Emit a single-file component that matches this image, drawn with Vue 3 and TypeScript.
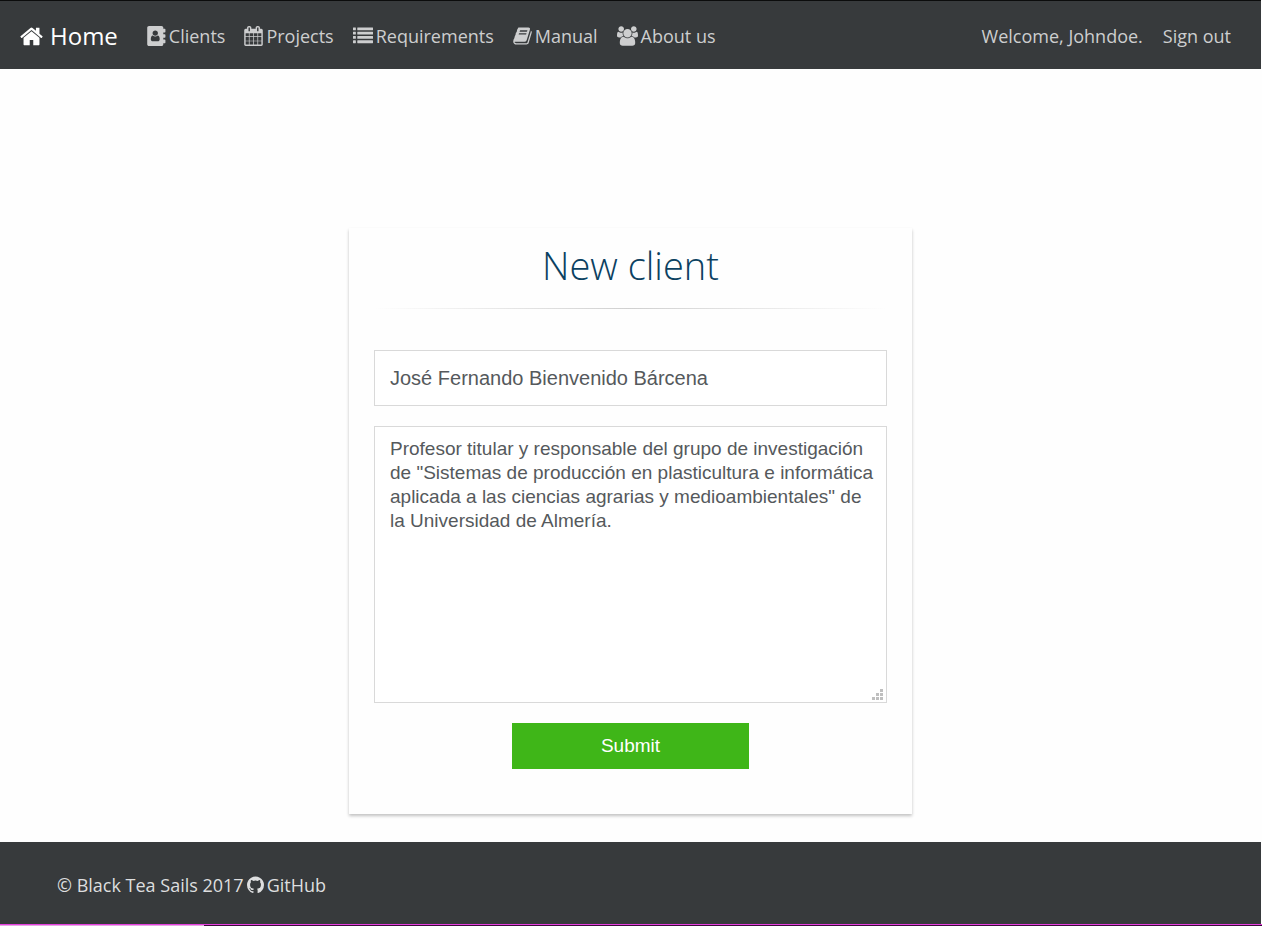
<script setup lang="ts">
import { ref } from 'vue'

interface NavItem {
  label: string
  width: number
  viewBox: string
  path: string
}

const navItems: NavItem[] = [
  {
    label: 'Clients',
    width: 19,
    viewBox: '0 0 1664 1792',
    path: 'M160 0h1120q66 0 113 47t47 113v1472q0 66-47 113t-113 47h-1120q-66 0-113-47t-47-113v-1472q0-66 47-113t113-47zM720 400q-100 0-170 70t-70 170 70 170 170 70 170-70 70-170-70-170-170-70zM500 850q-82 8-126 86t-54 234q0 90 50 146t130 56h440q80 0 130-56t50-146q-10-156-54-234t-126-86q-98 90-220 90t-220-90zM1440 256h128q26 0 45 19t19 45v192q0 26-19 45t-45 19h-128zM1440 736h128q26 0 45 19t19 45v192q0 26-19 45t-45 19h-128zM1440 1216h128q26 0 45 19t19 45v192q0 26-19 45t-45 19h-128z',
  },
  {
    label: 'Projects',
    width: 19,
    viewBox: '64 0 1664 1792',
    path: 'M192 1664h288v-288h-288v288zm352 0h320v-288h-320v288zm-352-352h288v-320h-288v320zm352 0h320v-320h-320v320zm-352-384h288v-288h-288v288zm736 736h320v-288h-320v288zm-384-736h320v-288h-320v288zm768 736h288v-288h-288v288zm-384-352h320v-320h-320v320zm-352-864v-288q0-13-9.500-22.500t-22.500-9.500h-64q-13 0-22.500 9.500t-9.500 22.500v288q0 13 9.500 22.500t22.500 9.500h64q13 0 22.500-9.500t9.500-22.500zm736 864h288v-320h-288v320zm-384-384h320v-288h-320v288zm384 0h288v-288h-288v288zm32-480v-288q0-13-9.500-22.500t-22.500-9.500h-64q-13 0-22.500 9.500t-9.500 22.500v288q0 13 9.500 22.500t22.500 9.500h64q13 0 22.500-9.500t9.500-22.500zm384-64v1280q0 52-38 90t-90 38h-1408q-52 0-90-38t-38-90v-1280q0-52 38-90t90-38h128v-96q0-66 47-113t113-47h64q66 0 113 47t47 113v96h384v-96q0-66 47-113t113-47h64q66 0 113 47t47 113v96h128q52 0 90 38t38 90z',
  },
  {
    label: 'Requirements',
    width: 20,
    viewBox: '0 0 1792 1792',
    path: 'M32 128h192q32 0 32 32v192q0 32-32 32h-192q-32 0-32-32v-192q0-32 32-32zM32 512h192q32 0 32 32v192q0 32-32 32h-192q-32 0-32-32v-192q0-32 32-32zM32 896h192q32 0 32 32v192q0 32-32 32h-192q-32 0-32-32v-192q0-32 32-32zM32 1280h192q32 0 32 32v192q0 32-32 32h-192q-32 0-32-32v-192q0-32 32-32zM416 128h1344q32 0 32 32v192q0 32-32 32h-1344q-32 0-32-32v-192q0-32 32-32zM416 512h1344q32 0 32 32v192q0 32-32 32h-1344q-32 0-32-32v-192q0-32 32-32zM416 896h1344q32 0 32 32v192q0 32-32 32h-1344q-32 0-32-32v-192q0-32 32-32zM416 1280h1344q32 0 32 32v192q0 32-32 32h-1344q-32 0-32-32v-192q0-32 32-32z',
  },
  {
    label: 'Manual',
    width: 19,
    viewBox: '64 0 1664 1792',
    path: 'M1703 478q40 57 18 129l-275 906q-19 64-76.500 107.500t-122.500 43.500h-923q-77 0-148.500-53.500t-99.500-131.500q-24-67-2-127 0-4 3-27t4-37q1-8-3-21.500t-3-19.500q2-11 8-21t16.500-23.500 16.500-23.500q23-38 45-91.500t30-91.500q3-10 .5-30t-.5-28q3-11 17-28t17-23q21-36 42-92t25-90q1-9-2.500-32t.5-28q4-13 22-30.500t22-22.500q19-26 42.500-84.500t27.500-96.500q1-8-3-25.500t-2-26.500q2-8 9-18t18-23 17-21q8-12 16.500-30.500t15-35 16-36 19.500-32 26.500-23.500 36-11.500 47.500 5.500l-1 3q38-9 51-9h761q74 0 114 56t18 130l-274 906q-36 119-71.500 153.500t-128.500 34.500h-869q-27 0-38 15-11 16-1 43 24 70 144 70h923q29 0 56-15.500t35-41.500l300-987q7-22 5-57 38 15 59 43zm-1064 2q-4 13 2 22.500t20 9.500h608q13 0 25.500-9.500t16.500-22.500l21-64q4-13-2-22.500t-20-9.500h-608q-13 0-25.500 9.500t-16.500 22.500zm-83 256q-4 13 2 22.500t20 9.500h608q13 0 25.500-9.500t16.500-22.500l21-64q4-13-2-22.500t-20-9.500h-608q-13 0-25.500 9.500t-16.500 22.500z',
  },
  {
    label: 'About us',
    width: 21,
    viewBox: '0 0 1920 1792',
    path: 'M593 896q-162 5-265 128h-134q-82 0-138-40.500t-56-118.500q0-353 124-353 6 0 43.500 21t97.500 42.500 119 21.500q67 0 133-23-5 37-5 66 0 139 81 256zm1071 637q0 120-73 189.500t-194 69.500h-874q-121 0-194-69.500t-73-189.500q0-53 3.500-103.500t14-109 26.500-108.500 43-97.500 62-81 85.500-53.500 111.500-20q10 0 43 21.500t73 48 107 48 135 21.500 135-21.500 107-48 73-48 43-21.500q61 0 111.500 20t85.500 53.500 62 81 43 97.500 26.500 108.500 14 109 3.500 103.500zm-1024-1277q0 106-75 181t-181 75-181-75-75-181 75-181 181-75 181 75 75 181zm704 384q0 159-112.500 271.500t-271.500 112.500-271.500-112.500-112.500-271.500 112.500-271.500 271.500-112.500 271.500 112.500 112.500 271.500zm576 225q0 78-56 118.500t-138 40.500h-134q-103-123-265-128 81-117 81-256 0-29-5-66 66 23 133 23 59 0 119-21.500t97.500-42.500 43.500-21q124 0 124 353zm-128-609q0 106-75 181t-181 75-181-75-75-181 75-181 181-75 181 75 75 181z',
  },
]

const clientName = ref('José Fernando Bienvenido Bárcena')
const description = ref(
  'Profesor titular y responsable del grupo de investigación de "Sistemas de producción en plasticultura e informática aplicada a las ciencias agrarias y medioambientales" de la Universidad de Almería.',
)
</script>

<template>
  <div class="page">
    <header class="navbar">
      <nav class="nav-links" aria-label="Main">
        <a class="brand" href="#">
          <svg width="23" height="25" viewBox="64 0 1664 1792" fill="currentColor" aria-hidden="true">
            <path d="M1472 992v480q0 26-19 45t-45 19h-384v-384h-256v384h-384q-26 0-45-19t-19-45v-480q0-1 .5-3t.5-3l575-474 575 474q1 2 1 6zm223-69l-62 74q-8 9-21 11h-3q-13 0-21-7l-692-577-692 577q-12 8-24 7-13-2-21-11l-62-74q-8-10-7-23.500t11-21.500l719-599q32-26 76-26t76 26l244 204v-195q0-14 9-23t23-9h192q14 0 23 9t9 23v408l219 182q10 8 11 21.500t-7 23.500z" />
          </svg>
          <span>Home</span>
        </a>
        <a v-for="item in navItems" :key="item.label" class="nav-link" href="#">
          <svg :width="item.width" height="20" :viewBox="item.viewBox" fill="currentColor" fill-rule="evenodd" aria-hidden="true">
            <path :d="item.path" />
          </svg>
          <span>{{ item.label }}</span>
        </a>
      </nav>
      <div class="account">
        <a class="nav-link" href="#">Welcome, Johndoe.</a>
        <a class="nav-link" href="#">Sign out</a>
      </div>
    </header>

    <main class="content">
      <form class="card" @submit.prevent>
        <h1 class="title">New client</h1>
        <hr class="rule" />
        <input v-model="clientName" class="field name" type="text" aria-label="Name" />
        <div class="area-wrap">
          <textarea v-model="description" class="field area" aria-label="Description" spellcheck="false"></textarea>
          <svg class="grip" width="11" height="11" viewBox="0 0 11 11" aria-hidden="true">
            <path fill="#bfbfbf" d="M8 0h3v3h-3zM4 4h3v3h-3zM8 4h3v3h-3zM0 8h3v3h-3zM4 8h3v3h-3zM8 8h3v3h-3z" />
          </svg>
        </div>
        <button class="submit" type="submit">Submit</button>
      </form>
    </main>

    <footer class="footer">
      <span>© Black Tea Sails 2017</span>
      <a class="github" href="#">
        <svg width="17" height="20" viewBox="128 0 1536 1792" fill="currentColor" aria-hidden="true">
          <path d="M896 128q209 0 385.500 103t279.500 279.500 103 385.500q0 251-146.500 451.500t-378.500 277.500q-27 5-40-7t-13-30q0-3 .5-76.500t.5-134.500q0-97-52-142 57-6 102.500-18t94-39 81-66.500 53-105 20.500-150.500q0-119-79-206 37-91-8-204-28-9-81 11t-92 44l-38 24q-93-26-192-26t-192 26q-16-11-42.500-27t-83.500-38.500-85-13.500q-45 113-8 204-79 87-79 206 0 85 20.500 150t52.500 105 80.500 67 94 39 102.500 18q-39 36-49 103-21 10-45 15t-57 5-65.500-21.500-55.500-62.500q-19-32-48.500-52t-49.500-24l-20-3q-21 0-29 4.500t-5 11.500 9 14 13 12l7 5q22 10 43.500 38t31.500 51l10 23q13 38 44 61.500t67 30 69.500 7 55.500-3.500l23-4q0 38 .5 88.500t.5 54.500q0 18-13 30t-40 7q-232-77-378.500-277.500t-146.500-451.500q0-209 103-385.500t279.500-279.500 385.500-103z" />
        </svg>
        <span>GitHub</span>
      </a>
    </footer>
    <div class="edge"></div>
  </div>
</template>

<style>
body {
  margin: 0;
  background: #fefefe;
}
</style>

<style scoped>
.page {
  display: flex;
  flex-direction: column;
  min-height: 100vh;
  font-family: "Segoe UI", "Open Sans", "Noto Sans", sans-serif;
  font-size: 18px;
  line-height: 28px;
}

a {
  color: inherit;
  text-decoration: none;
}

svg {
  flex: none;
}

.navbar {
  display: flex;
  align-items: center;
  justify-content: space-between;
  box-sizing: border-box;
  min-height: 69px;
  margin-right: 1px;
  padding: 2px 30px 0 20px;
  border-top: 1px solid #0b0c0c;
  background: #373a3c;
  color: #cdcecf;
}

.nav-links,
.account {
  display: flex;
  align-items: center;
}

.nav-links {
  gap: 19px;
}

.account {
  gap: 20px;
}

.nav-link {
  display: flex;
  align-items: center;
  gap: 3px;
  white-space: nowrap;
}

.brand {
  display: flex;
  align-items: center;
  gap: 7px;
  margin-right: 10px;
  color: #fff;
  font-size: 24px;
}

.content {
  display: flex;
  flex: 1;
  flex-direction: column;
  justify-content: flex-end;
  align-items: center;
  margin-right: 1px;
  padding: 40px 16px 28px;
}

.card {
  display: flex;
  flex-direction: column;
  box-sizing: border-box;
  width: 100%;
  max-width: 563px;
  padding: 12px 25px 45px;
  background: #fefefe;
  box-shadow: 0 2px 3px rgba(0, 0, 0, 0.24);
}

.title {
  margin: 0;
  color: #0b4161;
  font-size: 38px;
  font-weight: 300;
  line-height: 50px;
  text-align: center;
}

.rule {
  width: 100%;
  height: 1px;
  margin: 18px 0 41px;
  border: 0;
  background: linear-gradient(to right, rgba(0, 0, 0, 0), #d0d0d0, rgba(0, 0, 0, 0));
}

.field {
  display: block;
  box-sizing: border-box;
  width: 100%;
  margin: 0;
  border: 1px solid #d9d9d9;
  border-radius: 0;
  outline: 0;
  background: #fff;
  color: #55595c;
  font-family: Arial, "Liberation Sans", sans-serif;
}

.name {
  height: 56px;
  padding: 0 15px;
  font-size: 20px;
}

.area-wrap {
  position: relative;
  margin-top: 20px;
}

.area {
  height: 277px;
  padding: 10px 8px 10px 15px;
  font-size: 19px;
  line-height: 24px;
  resize: none;
}

.grip {
  position: absolute;
  right: 4px;
  bottom: 3px;
}

.submit {
  align-self: center;
  width: 237px;
  height: 46px;
  margin-top: 20px;
  padding: 0;
  border: 0;
  background: #3fb618;
  color: #fff;
  font-family: Arial, "Liberation Sans", sans-serif;
  font-size: 19px;
  cursor: pointer;
}

.footer {
  display: flex;
  align-items: center;
  gap: 3px;
  box-sizing: border-box;
  min-height: 82px;
  margin-right: 1px;
  padding: 4px 57px 0;
  background: #373a3c;
  color: #dddedf;
}

.github {
  display: flex;
  align-items: center;
  gap: 3px;
}

.edge {
  height: 1px;
  border-top: 1px solid #e73fe0;
  background: linear-gradient(to right, #e3a9e2 204px, #3c0a3c 204px);
}
</style>
